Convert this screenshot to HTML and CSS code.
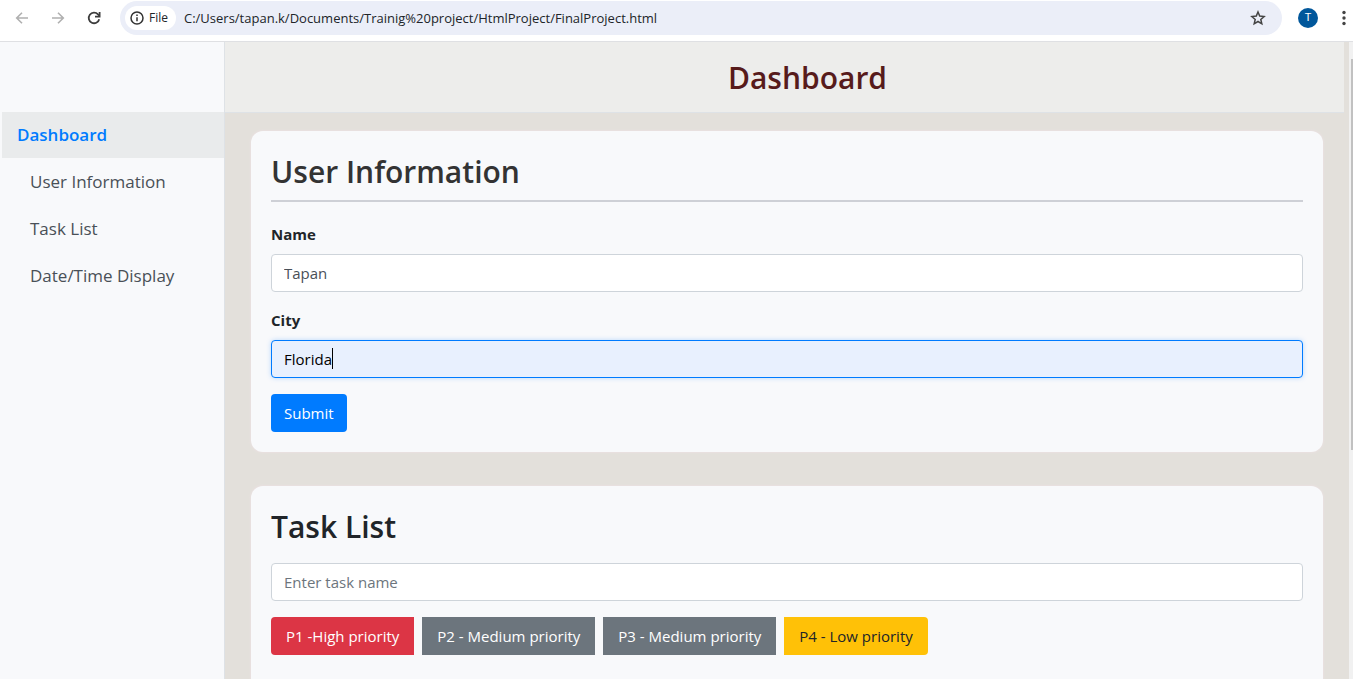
FILE: index.html
```html
<!DOCTYPE html>
<html lang="en">
<head>
<meta charset="utf-8">
<title>Dashboard</title>
<link rel="stylesheet" href="styles.css">
</head>
<body>
<div class="toolbar">
  <button class="tool" type="button" aria-label="Back"><svg width="16" height="16" viewBox="0 0 16 16" fill="none" stroke="#b0b0b0" stroke-width="1.6"><path d="M14 8H3M8 2.7 2.7 8 8 13.3"/></svg></button>
  <button class="tool" type="button" aria-label="Forward"><svg width="16" height="16" viewBox="0 0 16 16" fill="none" stroke="#b0b0b0" stroke-width="1.6"><path d="M2 8h11M8 2.7 13.3 8 8 13.3"/></svg></button>
  <button class="tool" type="button" aria-label="Reload"><svg width="16" height="16" viewBox="0 0 16 16" fill="none" stroke="#3c3c3c" stroke-width="1.8"><path d="M13.2 9.2A5.3 5.3 0 1 1 12 4.4L13.5 6"/><path d="M13.6 2v4.6H9"/></svg></button>
  <div class="address">
    <span class="chip"><svg width="14" height="14" viewBox="0 0 14 14" fill="none" stroke="#333" stroke-width="1.5"><circle cx="7" cy="7" r="6"/><path d="M7 6.2v4M7 3.4v1.5"/></svg>File</span>
    <span class="url">C:/Users/tapan.k/Documents/Trainig%20project/HtmlProject/FinalProject.html</span>
    <button class="star" type="button" aria-label="Bookmark"><svg width="16" height="16" viewBox="0 0 16 16" fill="none" stroke="#444" stroke-width="1.5"><path d="M8 2 9.7 6.1 14.1 6.5 10.8 9.4 11.8 13.8 8 11.5 4.2 13.8 5.2 9.4 1.9 6.5 6.3 6.1Z"/></svg></button>
  </div>
  <button class="avatar" type="button">T</button>
  <button class="more" type="button" aria-label="Menu"><svg width="4" height="16" viewBox="0 0 4 16" fill="#444"><circle cx="2" cy="2.5" r="1.7"/><circle cx="2" cy="8" r="1.7"/><circle cx="2" cy="13.5" r="1.7"/></svg></button>
</div>
<div class="page">
  <nav class="sidebar">
    <a class="link active" href="#dashboard">Dashboard</a>
    <a class="link" href="#user">User Information</a>
    <a class="link" href="#tasks">Task List</a>
    <a class="link" href="#date">Date/Time Display</a>
  </nav>
  <main class="main">
    <header class="header"><h1 class="title">Dashboard</h1></header>
    <div class="content">
      <section class="card">
        <h2 class="heading ruled">User Information</h2>
        <form class="form">
          <div class="field">
            <label class="label" for="name">Name</label>
            <input class="input" id="name" type="text" value="Tapan">
          </div>
          <div class="field">
            <label class="label" for="city">City</label>
            <div class="filled-wrap"><input class="input filled" id="city" type="text" value="Florida"><span class="caret-line" aria-hidden="true"><span class="caret-text">Florida</span></span></div>
          </div>
          <button class="btn primary" type="button">Submit</button>
        </form>
      </section>
      <section class="card">
        <h2 class="heading">Task List</h2>
        <input class="input" type="text" placeholder="Enter task name" aria-label="Task name">
        <div class="group">
          <button class="btn danger" type="button">P1 -High priority</button>
          <button class="btn secondary" type="button">P2 - Medium priority</button>
          <button class="btn secondary" type="button">P3 - Medium priority</button>
          <button class="btn warning" type="button">P4 - Low priority</button>
        </div>
      </section>
    </div>
  </main>
  <div class="scrollbar"><div class="thumb"></div></div>
</div>
</body>
</html>
```
FILE: styles.css
```css
* { box-sizing: border-box; }
body {
  margin: 0;
  height: 100vh;
  display: flex;
  flex-direction: column;
  overflow: hidden;
  font: 15px/24px "Open Sans", "Noto Sans", sans-serif;
  color: #212529;
  background: #fff;
}
button, input { font: inherit; }
button { cursor: pointer; }

.toolbar {
  flex: none;
  display: flex;
  align-items: center;
  padding: 1px 7px 6px 14px;
  border-bottom: 1px solid #dfe0e3;
}
.tool, .star, .more {
  display: flex;
  padding: 0;
  border: 0;
  background: none;
}
.tool { margin-right: 20px; }
.tool:nth-child(3) { margin-right: 18px; }
.address {
  flex: 1;
  display: flex;
  align-items: center;
  height: 34px;
  padding: 0 16px 0 5px;
  border-radius: 17px;
  background: #ebeef8;
}
.chip {
  display: flex;
  align-items: center;
  gap: 5px;
  height: 24px;
  padding: 0 8px 0 5px;
  border-radius: 12px;
  background: #fff;
  font-size: 12px;
  font-weight: 500;
}
.url {
  flex: 1;
  margin-left: 8px;
  font-size: 13px;
  white-space: nowrap;
}
.avatar {
  width: 20px;
  height: 20px;
  margin: 0 24px 0 16px;
  padding: 0;
  border: 0;
  border-radius: 50%;
  background: #01579b;
  color: #fff;
  font: 11px/20px Roboto, sans-serif;
}

.page { flex: 1; min-height: 0; display: flex; }
.sidebar {
  flex: none;
  width: 225px;
  padding: 70px 0 0 2px;
  border-right: 1px solid #dee2e6;
  background: #f8f9fb;
}
.link {
  display: block;
  padding: 10px 28px;
  color: #495057;
  font-size: 17px;
  line-height: 27px;
  text-decoration: none;
}
.link.active {
  padding: 10px 15px;
  background: #e9ebec;
  color: #007bff;
  font-weight: 600;
  line-height: 26px;
}

.main {
  flex: 1;
  min-width: 0;
  display: flex;
  flex-direction: column;
  background: #e3e0db;
}
.header {
  margin-right: 5px;
  padding: 17px 0 15px 46px;
  border-bottom: 1px solid #dee2e6;
  background: #ededeb;
  text-align: center;
}
.title {
  margin: 0;
  color: #571b1b;
  font-size: 30px;
  font-weight: 600;
  line-height: 38px;
}
.content {
  flex: 1;
  display: flex;
  flex-direction: column;
  gap: 34px;
  padding: 18px 26px 0;
}
.card {
  padding: 20px;
  border-radius: 12px;
  background: #f8f9fb;
  box-shadow: 0 0 2px 1px #e9e0e0;
}
.card:last-child {
  flex: 1;
  border-radius: 12px 12px 0 0;
}
.heading {
  margin: 0 0 15px;
  font-size: 30px;
  font-weight: 600;
  line-height: 42px;
}
.ruled {
  margin-bottom: 20px;
  padding-bottom: 7px;
  border-bottom: 2px solid #ced0d6;
  color: #333;
}
.field { margin-bottom: 16px; }
.label {
  display: block;
  margin-bottom: 8px;
  font-weight: 700;
}
.input {
  display: block;
  width: 100%;
  height: 38px;
  padding: 6px 12px;
  border: 1px solid #ced4da;
  border-radius: 4px;
  outline: 0;
  background: #fff;
  color: #495057;
}
.input::placeholder { color: #6c757d; opacity: 1; }
.filled-wrap { position: relative; }
.filled {
  border-color: #007bff;
  background: #e8f0fe;
  box-shadow: 0 0 5px rgba(0, 123, 255, 0.25);
  color: #000;
}
.caret-line {
  position: absolute;
  top: 8px;
  left: 13px;
  color: transparent;
  line-height: 21px;
  pointer-events: none;
}
.caret-text { display: block; border-right: 1px solid #000; }
.btn {
  padding: 6px 12px;
  border: 1px solid transparent;
  border-radius: 4px;
  color: #fff;
}
.primary { background: #007bff; }
.danger { background: #dc3545; }
.secondary { background: #6c757d; }
.warning { background: #ffc107; color: #212529; }
.group { display: flex; gap: 8px; margin-top: 16px; }
.group .btn { padding: 6px 14px; border-radius: 0; }
.group .btn:first-child { border-radius: 4px 0 0 4px; }
.group .btn:last-child { border-radius: 0 4px 4px 0; }

.scrollbar {
  flex: none;
  width: 4px;
  padding: 17px 0 0 2px;
  background: #f1f1f1;
}
.thumb { height: 63%; background: #c1c1c1; }
```
